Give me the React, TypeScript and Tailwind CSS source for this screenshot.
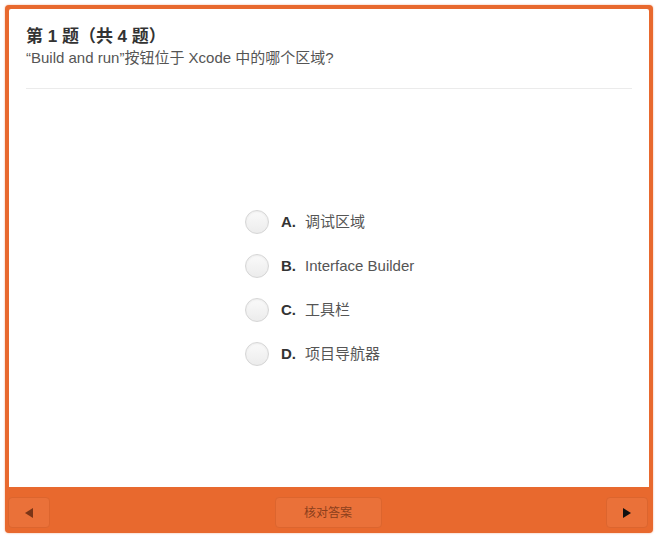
import React from 'react';

const options = [
  { key: 'A', text: '调试区域' },
  { key: 'B', text: 'Interface Builder' },
  { key: 'C', text: '工具栏' },
  { key: 'D', text: '项目导航器' },
];

const font = { fontFamily: '"Liberation Sans", "Noto Sans CJK SC", sans-serif' };

const App = () => {
  return (
    <div className="w-[658px] h-[535px] bg-white pt-[5px] px-[5px] pb-[2px]" style={font}>
      <div className="flex flex-col h-full bg-[#e8692e] rounded-[4px] shadow-[0_0_2px_rgba(232,105,46,0.6)]">
        {/* Question panel */}
        <div className="flex flex-col flex-1 mx-[4px] mt-[4px] bg-white rounded-t-[2px] px-[17px]">
          <div className="pt-[18px] pb-[20px] border-b border-[#ebebeb]">
            <h1 className="text-[17px] font-bold text-[#333] leading-[20px]">第 1 题（共 4 题）</h1>
            <p className="mt-[1px] text-[15px] text-[#555] leading-[20px]">“Build and run”按钮位于 Xcode 中的哪个区域?</p>
          </div>

          <div className="flex flex-1 pt-[121px] pl-[219px]">
            <ul className="flex flex-col gap-[20px]">
              {options.map((o) => (
                <li key={o.key} className="flex items-center h-[24px]">
                  <span className="w-[24px] h-[24px] rounded-full border border-[#d6d6d6] bg-gradient-to-b from-[#fafafa] to-[#ececec] shadow-[inset_0_1px_2px_rgba(0,0,0,0.06)]" />
                  <span className="ml-[12px] w-[24px] text-[15px] font-bold text-[#333]">{o.key}.</span>
                  <span className="text-[15px] text-[#555]">{o.text}</span>
                </li>
              ))}
            </ul>
          </div>
        </div>

        {/* Bottom bar */}
        <div className="flex items-start justify-between h-[46px] px-[3px] pt-[10px]">
          <button className="flex items-center justify-center w-[42px] h-[31px] rounded-[4px] bg-[#ea7139] border border-[#dc652e]">
            <svg width="10" height="12" viewBox="0 0 10 12">
              <polygon points="9,1 9,11 1,6" fill="#7a3517" />
            </svg>
          </button>
          <button className="flex items-center justify-center w-[107px] h-[31px] rounded-[4px] bg-[#ea7139] border border-[#dc652e] text-[12px] text-[#8c3f1c]">
            核对答案
          </button>
          <button className="flex items-center justify-center w-[42px] h-[31px] rounded-[4px] bg-[#ea7139] border border-[#dc652e] mr-[2px]">
            <svg width="10" height="12" viewBox="0 0 10 12">
              <polygon points="1,1 1,11 9,6" fill="#111" />
            </svg>
          </button>
        </div>
      </div>
    </div>
  );
};

export default App;
